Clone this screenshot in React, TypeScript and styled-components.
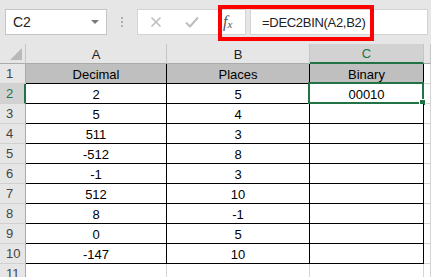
import styled, { createGlobalStyle } from 'styled-components'

const GlobalStyle = createGlobalStyle`
  html, body {
    margin: 0;
    padding: 0;
    background: #ffffff;
  }
`

const columns = ['A', 'B', 'C']

const rows: string[][] = [
  ['Decimal', 'Places', 'Binary'],
  ['2', '5', '00010'],
  ['5', '4', ''],
  ['511', '3', ''],
  ['-512', '8', ''],
  ['-1', '3', ''],
  ['512', '10', ''],
  ['8', '-1', ''],
  ['0', '5', ''],
  ['-147', '10', ''],
]

const App = () => {
  return (
    <Page>
      <GlobalStyle />
      <FormulaBar>
        <NameBox>
          <span>C2</span>
          <DropArrow />
        </NameBox>
        <Grip>
          <Dot />
          <Dot />
          <Dot />
        </Grip>
        <ButtonGroup>
          <BarButton>
            <svg width='12' height='12' viewBox='0 0 12 12'>
              <path d='M1.5 1.5 L10.5 10.5 M10.5 1.5 L1.5 10.5' stroke='#bdbdbd' strokeWidth='1.6' fill='none' />
            </svg>
          </BarButton>
          <BarButton>
            <svg width='14' height='12' viewBox='0 0 14 12'>
              <path d='M1 6.5 L5 10.5 L13 1.5' stroke='#bdbdbd' strokeWidth='2' fill='none' />
            </svg>
          </BarButton>
          <FxButton>
            f<sub>x</sub>
          </FxButton>
        </ButtonGroup>
        <FormulaInput>=DEC2BIN(A2,B2)</FormulaInput>
        <RedFrame />
      </FormulaBar>

      <Sheet>
        <Corner>
          <CornerTriangle />
        </Corner>
        {columns.map((col) => (
          <ColHeader key={col} $active={col === 'C'}>
            {col}
          </ColHeader>
        ))}
        <ColHeader $active={false} />

        {rows.map((row, r) => (
          <Row key={r} r={r} row={row} />
        ))}

        <RowHeader $active={false}>11</RowHeader>
        {columns.map((col) => (
          <PlainCell key={col} />
        ))}
        <PlainCell />
      </Sheet>
    </Page>
  )
}

const Row = ({ r, row }: { r: number; row: string[] }) => {
  const rowNum = r + 1
  return (
    <>
      <RowHeader $active={rowNum === 2}>{rowNum}</RowHeader>
      {row.map((value, c) => (
        <TableCell key={c} $head={r === 0}>
          {value}
          {rowNum === 2 && c === 2 && (
            <Selection>
              <FillHandle />
            </Selection>
          )}
        </TableCell>
      ))}
      <PlainCell />
    </>
  )
}

const Page = styled.div`
  width: 431px;
  height: 277px;
  overflow: hidden;
  background: #ffffff;
  font-family: 'Liberation Sans', Arial, sans-serif;
  font-size: 13px;
  color: #000000;
`

const FormulaBar = styled.div`
  position: relative;
  height: 44px;
  box-sizing: border-box;
  background: #e6e6e6;
  display: flex;
  align-items: flex-start;
  padding: 9px 0 0 5px;
`

const NameBox = styled.div`
  width: 102px;
  height: 26px;
  box-sizing: border-box;
  background: #ffffff;
  border: 1px solid #c6c6c6;
  display: flex;
  align-items: center;
  justify-content: space-between;
  padding: 0 7px 0 7px;
  font-size: 14px;
  color: #222222;
`

const DropArrow = styled.div`
  width: 0;
  height: 0;
  border-left: 4px solid transparent;
  border-right: 4px solid transparent;
  border-top: 4px solid #7a7a7a;
`

const Grip = styled.div`
  width: 30px;
  height: 26px;
  display: flex;
  flex-direction: column;
  align-items: center;
  justify-content: center;
  gap: 2px;
`

const Dot = styled.div`
  width: 2px;
  height: 2px;
  background: #b0b0b0;
`

const ButtonGroup = styled.div`
  width: 109px;
  height: 26px;
  box-sizing: border-box;
  background: #ffffff;
  border: 1px solid #d4d4d4;
  display: grid;
  grid-template-columns: 36px 36px 1fr;
  align-items: center;
`

const BarButton = styled.div`
  display: flex;
  align-items: center;
  justify-content: center;
`

const FxButton = styled.div`
  font-family: 'Liberation Serif', 'Times New Roman', serif;
  font-style: italic;
  font-size: 16px;
  color: #555555;
  padding-left: 13px;
  line-height: 1;

  sub {
    font-size: 11px;
    vertical-align: -1px;
  }
`

const FormulaInput = styled.div`
  flex: 1;
  height: 26px;
  box-sizing: border-box;
  margin-left: 4px;
  margin-right: 3px;
  background: #ffffff;
  border: 1px solid #d4d4d4;
  display: flex;
  align-items: center;
  padding-left: 11px;
  font-size: 13px;
  color: #222222;
  letter-spacing: -0.3px;
`

const RedFrame = styled.div`
  position: absolute;
  left: 218px;
  top: 5px;
  width: 156px;
  height: 36px;
  box-sizing: border-box;
  border: 4px solid #ff0000;
  pointer-events: none;
`

const Sheet = styled.div`
  display: grid;
  grid-template-columns: 26px 141px 143px 114px 1fr;
  grid-template-rows: 20px;
  grid-auto-rows: 20px;
`

const Corner = styled.div`
  position: relative;
  box-sizing: border-box;
  background: #e6e6e6;
  border-right: 1px solid #c6c6c6;
  border-bottom: 1px solid #ababab;
`

const CornerTriangle = styled.div`
  position: absolute;
  right: 3px;
  bottom: 3px;
  width: 0;
  height: 0;
  border-left: 12px solid transparent;
  border-bottom: 12px solid #b9b9b9;
`

const ColHeader = styled.div<{ $active: boolean }>`
  box-sizing: border-box;
  background: ${(p) => (p.$active ? '#d2d2d2' : '#e6e6e6')};
  border-right: 1px solid #c6c6c6;
  border-bottom: ${(p) => (p.$active ? '2px solid #217346' : '1px solid #ababab')};
  display: flex;
  align-items: center;
  justify-content: center;
  padding-top: 1px;
  font-size: 13px;
  color: ${(p) => (p.$active ? '#217346' : '#222222')};
`

const RowHeader = styled.div<{ $active: boolean }>`
  box-sizing: border-box;
  background: ${(p) => (p.$active ? '#d2d2d2' : '#e6e6e6')};
  border-right: ${(p) => (p.$active ? '2px solid #217346' : '1px solid #ababab')};
  border-bottom: 1px solid #d0d0d0;
  display: flex;
  align-items: center;
  padding-left: 6px;
  font-size: 13px;
  color: ${(p) => (p.$active ? '#217346' : '#444444')};
`

const TableCell = styled.div<{ $head: boolean }>`
  position: relative;
  box-sizing: border-box;
  background: ${(p) => (p.$head ? '#bfbfbf' : '#ffffff')};
  border-right: 1px solid #000000;
  border-bottom: 1px solid #000000;
  display: flex;
  align-items: center;
  justify-content: center;
  padding-top: 2px;
`

const PlainCell = styled.div`
  box-sizing: border-box;
  background: #ffffff;
  border-right: 1px solid #d4d4d4;
  border-bottom: 1px solid #d4d4d4;
`

const Selection = styled.div`
  position: absolute;
  left: -2px;
  top: -2px;
  right: -1px;
  bottom: -1px;
  border: 2px solid #217346;
`

const FillHandle = styled.div`
  position: absolute;
  right: -4px;
  bottom: -4px;
  width: 5px;
  height: 5px;
  background: #217346;
  border: 1px solid #ffffff;
`

export default App
